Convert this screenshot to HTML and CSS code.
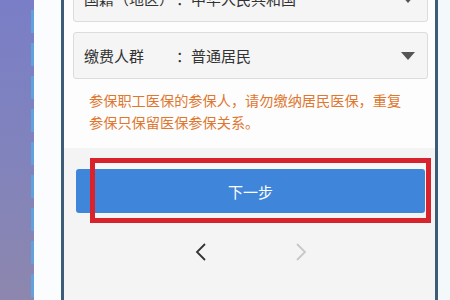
FILE: index.html
```html
<!DOCTYPE html>
<html lang="zh">
<head>
<meta charset="utf-8">
<link rel="stylesheet" href="styles.css">
</head>
<body>
<div class="frame">
  <div class="side"><div class="dashes"></div></div>
  <div class="gap"></div>
  <div class="phone">
    <div class="content">
      <div class="form">
        <div class="field">
          <span class="label">国籍（地区）</span><span class="value">：中华人民共和国</span>
          <svg class="caret" width="14" height="8" viewBox="0 0 14 8"><path d="M0 0 L14 0 L7 8 Z" fill="#555"/></svg>
        </div>
        <div class="field">
          <span class="label">缴费人群</span><span class="value">：普通居民</span>
          <svg class="caret" width="14" height="8" viewBox="0 0 14 8"><path d="M0 0 L14 0 L7 8 Z" fill="#555"/></svg>
        </div>
        <p class="notice">参保职工医保的参保人，请勿缴纳居民医保，重复<br>参保只保留医保参保关系。</p>
      </div>
      <div class="footer">
        <div class="btn-wrap">
          <button class="next">下一步</button>
          <div class="highlight"></div>
        </div>
        <div class="pager">
          <svg width="12" height="18" viewBox="0 0 12 18"><polyline points="10,1 2,9 10,17" fill="none" stroke="#333" stroke-width="1.8"/></svg>
          <svg width="12" height="18" viewBox="0 0 12 18"><polyline points="2,1 10,9 2,17" fill="none" stroke="#c8c8c8" stroke-width="1.8"/></svg>
        </div>
      </div>
    </div>
  </div>
  <div class="right"></div>
</div>
</body>
</html>
```

FILE: styles.css
```css
html, body {
  margin: 0;
  padding: 0;
  width: 450px;
  height: 300px;
  overflow: hidden;
  font-family: "Noto Sans CJK SC", "Noto Sans", sans-serif;
}
.frame {
  display: flex;
  height: 300px;
}
.side {
  width: 34px;
  position: relative;
  background: linear-gradient(180deg, #7a7ec6 0%, #8183bd 50%, #8d87ae 100%);
}
.dashes {
  position: absolute;
  right: 0;
  top: 0;
  width: 3px;
  height: 300px;
  background: repeating-linear-gradient(180deg, transparent 0 10px, #62a2dc 10px 33px);
}
.gap {
  width: 27px;
  background: #fbfcfd;
}
.phone {
  width: 371px;
  border-left: 3px solid #3c5c78;
  border-right: 3px solid #3c5c78;
  background: #f4f4f4;
}
.right {
  flex: 1;
  background: #f3f8fb;
}
.content {
  display: flex;
  flex-direction: column;
}
.form {
  background: #fdfdfd;
  padding: 0 7px 0 9px;
  margin-top: -25px;
  padding-bottom: 15px;
}
.field {
  height: 45px;
  display: flex;
  align-items: center;
  background: #f5f5f5;
  border: 1px solid #dcdcdc;
  border-radius: 3px;
  margin-bottom: 10px;
  padding: 0 12px 0 10px;
  font-size: 15px;
  color: #333;
}
.label {
  width: 92px;
}
.value {
  flex: 1;
}
.caret {
  margin-top: 1px;
}
.notice {
  margin: 8px 0 0 0;
  padding: 0 0 0 16px;
  font-size: 14.2px;
  line-height: 22px;
  color: #e0772f;
}
.footer {
  padding: 21px 10px 0 12px;
}
.btn-wrap {
  position: relative;
}
.next {
  display: block;
  width: 100%;
  height: 44px;
  border: none;
  border-radius: 3px;
  background: #3f86da;
  color: #fff;
  font-family: inherit;
  font-size: 15px;
}
.highlight {
  position: absolute;
  left: 14px;
  top: -11px;
  width: 331px;
  height: 55px;
  border: 5px solid #d8232c;
  box-sizing: content-box;
  background: transparent;
}
.highlight::before {
  content: "";
  position: absolute;
  left: 0;
  right: 0;
  top: 0;
  height: 6px;
  background: #f8f8f8;
}
.pager {
  display: flex;
  justify-content: center;
  gap: 88px;
  margin-top: 30px;
}
```
